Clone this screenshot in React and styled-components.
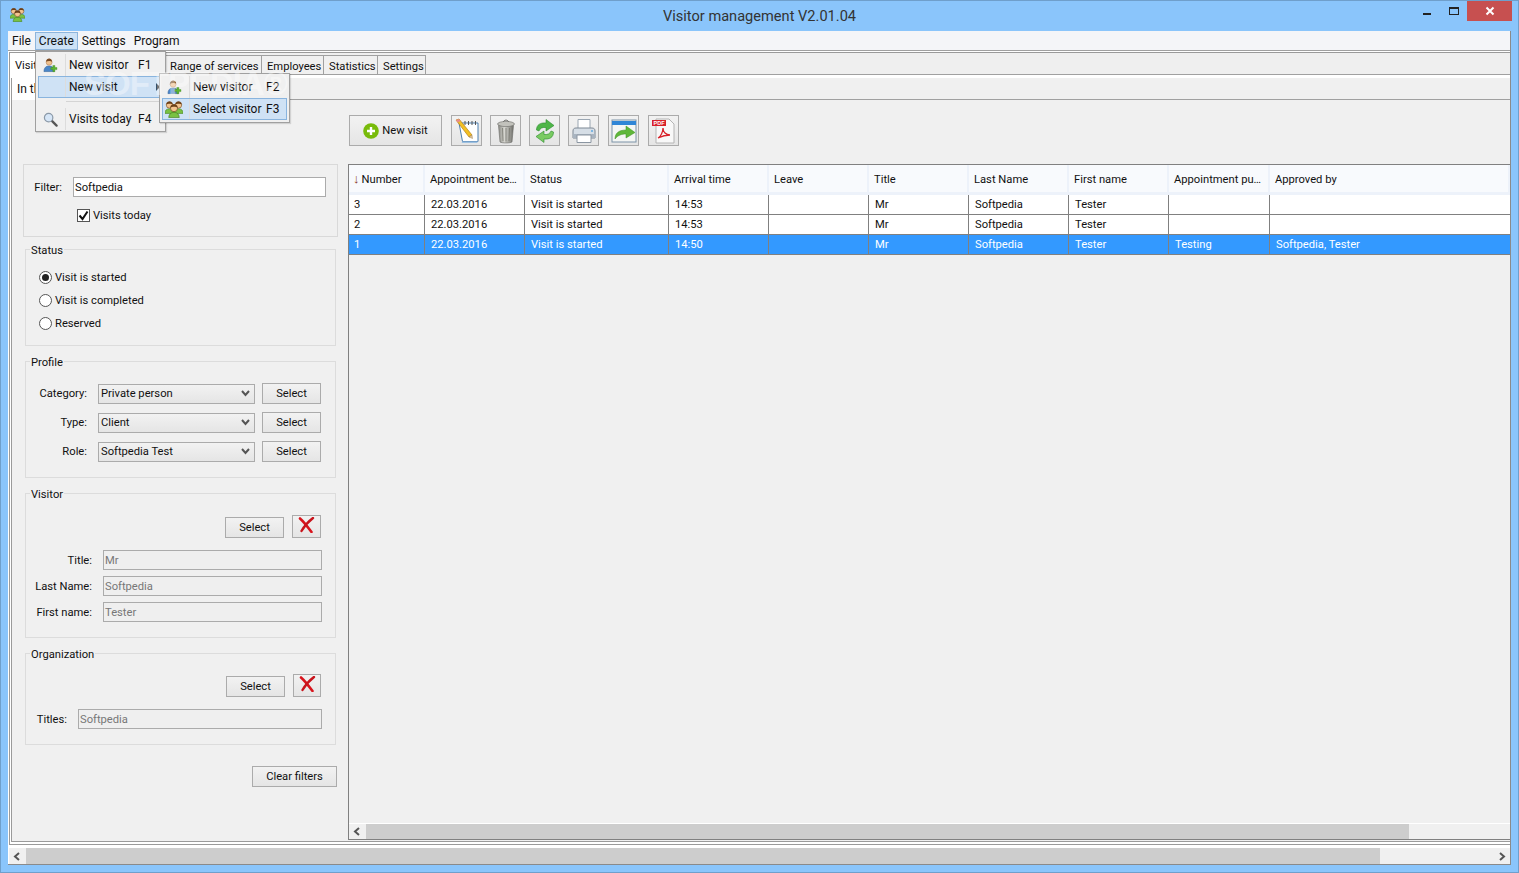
import React from "react"
import styled, { createGlobalStyle } from "styled-components"

const GlobalStyle = createGlobalStyle`
  html, body { margin: 0; padding: 0; overflow: hidden; }
  body { font-family: Roboto, "Noto Sans", "Liberation Sans", sans-serif; font-size: 11.2px; color: #111; }
  * { box-sizing: border-box; }
`

const Window = styled.div`
  position: relative;
  width: 1519px;
  height: 873px;
  display: flex;
  flex-direction: column;
  background: #8ac5fb;
  border: 1px solid #6f9fcb;
`
const TitleBar = styled.div`
  height: 30px;
  flex: none;
  display: grid;
  grid-template-columns: 1fr auto 1fr;
  align-items: center;
`
const TitleIcon = styled.div`
  display: flex;
  margin: -3px 0 0 9px;
`
const TitleText = styled.div`
  font-size: 14.6px;
  color: #333;
`
const WinControls = styled.div`
  display: flex;
  justify-content: flex-end;
  align-self: start;
  padding-right: 6px;
`
const WinBtn = styled.div`
  width: ${p => p.$w}px;
  height: 20px;
  display: flex;
  align-items: center;
  justify-content: center;
  background: ${p => p.$close ? "#c75050" : "transparent"};
`
const MinGlyph = styled.div`
  width: 8px;
  height: 2px;
  background: #222;
  margin-top: 6px;
`
const MaxGlyph = styled.div`
  width: 10px;
  height: 8px;
  border: 1px solid #222;
  border-top-width: 2px;
`
const Client = styled.div`
  flex: none;
  height: 834px;
  margin: 0 7px;
  background: #fff;
  display: flex;
  flex-direction: column;
  border-bottom: 1px solid #8a8a8a;
  border-right: 1px solid #8a8a8a;
`
const MenuBar = styled.div`
  height: 20px;
  flex: none;
  display: flex;
  align-items: stretch;
  background: #f4f5f8;
  border-bottom: 1px solid #a0a0a0;
`
const MenuTitle = styled.div`
  display: flex;
  align-items: center;
  padding: 0 4px;
  font-size: 12px;
  height: 18px;
  margin-top: 1px;
  background: ${p => p.$open ? "#cde2f6" : "transparent"};
  outline: ${p => p.$open ? "1px solid #8db5dc" : "none"};
  outline-offset: -1px;
`
const OuterTabs = styled.div`
  flex: none;
  height: 793px;
  margin: 1px 0 0 1px;
  border: 1px solid #9a9a9a;
  border-right: none;
  display: flex;
  flex-direction: column;
`
const TabRow = styled.div`
  height: 22px;
  flex: none;
  display: flex;
  align-items: flex-end;
  background: #efefef;
  border-bottom: 1px solid #a0a0a0;
`
const Tab = styled.div`
  height: ${p => p.$active ? 22 : 20}px;
  width: ${p => p.$w}px;
  display: flex;
  align-items: center;
  padding: 2px 0 0 5px;
  margin-bottom: -1px;
  background: ${p => p.$active ? "#fff" : "#f0f0f0"};
  border-right: 1px solid #a0a0a0;
  border-top: ${p => p.$active ? "none" : "1px solid #a0a0a0"};
  border-bottom: ${p => p.$active ? "none" : "1px solid #a0a0a0"};
  overflow: hidden;
  white-space: nowrap;
`
const InnerTabs = styled.div`
  flex: 1;
  min-height: 0;
  margin: 3px 0 2px 1px;
  display: flex;
  flex-direction: column;
  border: 1px solid #9a9a9a;
  border-top: none;
  border-right: none;
`
const InnerTabRow = styled.div`
  height: 22px;
  flex: none;
  display: flex;
  background: #f0f0f0;
  border-bottom: 1px solid #a0a0a0;
`
const InnerTab = styled.div`
  width: 110px;
  height: 22px;
  display: flex;
  align-items: center;
  padding-left: 5px;
  background: #fff;
  font-size: 12px;
`
const Body = styled.div`
  flex: 1;
  min-height: 0;
  display: flex;
  background: #f0f0f0;
`
const Sidebar = styled.div`
  width: 336px;
  flex: none;
  display: flex;
  flex-direction: column;
  padding-top: 64px;
`
const FilterBox = styled.div`
  margin-left: 11px;
  width: 315px;
  height: 73px;
  padding: 12px 11px 0 0;
  border: 1px solid #d9d9d9;
  display: flex;
  flex-direction: column;
`
const Row = styled.div`
  display: flex;
  align-items: ${p => p.$end ? "flex-end" : "center"};
  justify-content: ${p => p.$end ? "flex-end" : "flex-start"};
  height: ${p => p.$h || 20}px;
  gap: ${p => p.$gap || 0}px;
  margin-top: ${p => p.$mt || 0}px;
  padding-right: ${p => p.$pr || 0}px;
`
const Label = styled.div`
  width: ${p => p.$w}px;
  flex: none;
  text-align: right;
  padding-right: ${p => p.$pr || 11}px;
`
const TextInput = styled.div`
  flex: 1;
  height: 20px;
  display: flex;
  align-items: center;
  padding-left: 1px;
  border: 1px solid #ababab;
  background: ${p => p.$disabled ? "#efefef" : "#fff"};
  color: ${p => p.$disabled ? "#777" : "#111"};
`
const CheckRow = styled.div`
  display: flex;
  align-items: center;
  gap: 3px;
  margin: 12px 0 0 53px;
`
const CheckBox = styled.div`
  width: 13px;
  height: 13px;
  background: #fff;
  border: 1px solid #555;
  display: flex;
  align-items: center;
  justify-content: center;
`
const Group = styled.fieldset`
  margin: ${p => p.$mt}px 0 0 13px;
  padding: ${p => p.$pt}px 0 0 0;
  width: 311px;
  height: ${p => p.$h}px;
  border: 1px solid #dcdcdc;
  min-width: 0;
`
const Legend = styled.legend`
  margin-left: 4px;
  padding: 0 1px;
  height: 14px;
  line-height: 18px;
`
const RadioRow = styled.div`
  display: flex;
  align-items: center;
  gap: 3px;
  height: 23px;
  margin-left: 13px;
`
const Radio = styled.div`
  width: 13px;
  height: 13px;
  border-radius: 50%;
  border: 1px solid #555;
  background: #fff;
  display: flex;
  align-items: center;
  justify-content: center;
  &::after {
    content: "";
    display: ${p => p.$on ? "block" : "none"};
    width: 7px;
    height: 7px;
    border-radius: 50%;
    background: #222;
  }
`
const Combo = styled.div`
  width: 157px;
  height: 20px;
  flex: none;
  display: flex;
  align-items: center;
  justify-content: space-between;
  padding: 0 4px 0 2px;
  border: 1px solid #ababab;
  background: linear-gradient(#f2f2f2, #e5e5e5);
`
const Button = styled.div`
  width: ${p => p.$w || 59}px;
  height: 21px;
  flex: none;
  display: flex;
  align-items: center;
  justify-content: center;
  border: 1px solid #ababab;
  background: linear-gradient(#f2f2f2, #e5e5e5);
`
const ProfileButton = styled(Button)`
  margin-left: 7px;
`
const IconBtn = styled.div`
  width: ${p => p.$w || 29}px;
  height: 23px;
  flex: none;
  display: flex;
  align-items: center;
  justify-content: center;
  padding-bottom: 3px;
  border: 1px solid #ababab;
  background: linear-gradient(#f2f2f2, #e5e5e5);
`
const ClearRow = styled.div`
  display: flex;
  justify-content: flex-end;
  margin-top: 21px;
  width: 325px;
`
const Main = styled.div`
  flex: 1;
  min-width: 0;
  display: flex;
  flex-direction: column;
`
const Toolbar = styled.div`
  height: 64px;
  flex: none;
  display: flex;
  align-items: flex-start;
  padding: 15px 0 0 1px;
`
const ToolText = styled.div`
  width: 93px;
  height: 31px;
  flex: none;
  display: flex;
  align-items: center;
  justify-content: center;
  gap: 3px;
  border: 1px solid #ababab;
  background: linear-gradient(#f2f2f2, #e5e5e5);
`
const ToolIcon = styled.div`
  width: 31px;
  height: 31px;
  flex: none;
  margin-left: ${p => p.$ml}px;
  display: flex;
  align-items: center;
  justify-content: center;
  border: 1px solid #ababab;
  background: linear-gradient(#f2f2f2, #e5e5e5);
`
const TablePanel = styled.div`
  flex: 1;
  min-height: 0;
  display: flex;
  flex-direction: column;
  border: 1px solid #808080;
  border-right: none;
  margin-bottom: 1px;
`
const TableArea = styled.div`
  flex: 1;
  min-height: 0;
`
const Grid = styled.table`
  width: 100%;
  table-layout: fixed;
  border-collapse: separate;
  border-spacing: 0;
`
const Th = styled.th`
  height: 30px;
  padding: 3px 0 0 ${p => p.$first ? 4 : 5}px;
  font-weight: 400;
  font-size: 11.2px;
  line-height: 14px;
  text-align: left;
  white-space: nowrap;
  overflow: hidden;
  background: #f8fafd;
  border-right: 2px solid #edf2fa;
  border-bottom: 3px solid #edf2fa;
`
const Td = styled.td`
  height: 20px;
  padding: 0 0 0 ${p => p.$first ? 5 : 6}px;
  white-space: nowrap;
  overflow: hidden;
  background: ${p => p.$sel ? "#3399ff" : "#fff"};
  color: ${p => p.$sel ? "#fff" : "#111"};
  border-right: 1px solid #808080;
  border-bottom: 1px solid #808080;
  &:last-child { border-right: none; }
`
const SortArrow = styled.span`
  color: #8c3b2e;
  margin-right: 2px;
  font-size: 13px;
  line-height: 12px;
`
const ScrollBar = styled.div`
  height: 16px;
  flex: none;
  display: flex;
  align-items: stretch;
  background: #f0f0f0;
  border-top: ${p => p.$line ? "1px solid #fff" : "none"};
`
const ScrollArrow = styled.div`
  width: 17px;
  flex: none;
  display: flex;
  align-items: center;
  justify-content: center;
`
const ScrollThumb = styled.div`
  width: ${p => p.$w}px;
  flex: none;
  background: #cdcdcd;
`
const ScrollTrack = styled.div`
  flex: 1;
`
const BottomScroll = styled(ScrollBar)`
  margin-top: 3px;
  margin-left: 1px;
`
const Popup = styled.div`
  position: absolute;
  left: ${p => p.$x}px;
  top: ${p => p.$y}px;
  width: ${p => p.$w}px;
  height: ${p => p.$h}px;
  padding: 2px;
  background: #f0f0f0;
  border: 1px solid #a0a0a0;
  box-shadow: 1px 1px 1px rgba(0, 0, 0, 0.12);
  display: flex;
  flex-direction: column;
  z-index: ${p => p.$z};
`
const PopItem = styled.div`
  height: 22px;
  flex: none;
  display: flex;
  align-items: center;
  font-size: 12px;
  background: ${p => p.$hot ? "#cfe2f5" : "transparent"};
  outline: ${p => p.$hot ? "1px solid #89b4de" : "none"};
  outline-offset: -1px;
`
const PopIcon = styled.div`
  width: 28px;
  height: 100%;
  flex: none;
  display: flex;
  align-items: center;
  justify-content: center;
  padding-right: 3px;
  border-right: 1px solid #dcdcdc;
`
const PopLabel = styled.div`
  margin-left: 3px;
  width: ${p => p.$w}px;
`
const PopArrow = styled.div`
  margin-left: auto;
  margin-right: 3px;
  width: 0;
  height: 0;
  border-left: 4px solid #222;
  border-top: 4px solid transparent;
  border-bottom: 4px solid transparent;
`
const PopSep = styled.div`
  height: 1px;
  margin: 3px 0 6px 28px;
  background: #d4d4d4;
  flex: none;
`
const Watermark = styled.div`
  position: absolute;
  left: 83px;
  top: 64px;
  z-index: 5;
  font-family: "Liberation Sans", sans-serif;
  font-weight: 700;
  font-size: 33px;
  letter-spacing: -1px;
  white-space: nowrap;
  color: rgba(255, 255, 255, 0.38);
  pointer-events: none;
`

const UserAdd = () => (
  <svg width="15" height="16" viewBox="0 0 16 16">
    <path d="M1 15c0-4 2-6 5.500-6S12 11 12 15z" fill="#4a86c8" stroke="#2d5f99" strokeWidth=".6" />
    <circle cx="6.500" cy="5" r="3.200" fill="#f0c08c" stroke="#a5744a" strokeWidth=".5" />
    <path d="M3.300 4.500C3.500 1.800 5 1 6.500 1s3 .8 3.200 3.500C8.500 3.500 5 3.200 3.300 4.500z" fill="#7a4a22" />
    <path d="M10.500 8.500h2.200v2.200h2.200v2.200h-2.200v2.200h-2.200v-2.200H8.300v-2.200h2.200z" fill="#5cb531" stroke="#3d8a1c" strokeWidth=".4" />
  </svg>
)
const Person = ({ x, y, s = 1 }) => (
  <g transform={`translate(${x} ${y}) scale(${s})`}>
    <path d="M-5 11c0-3 2-5 5-5s5 2 5 5z" fill="#79c143" stroke="#3f7d1c" strokeWidth=".6" />
    <circle cx="0" cy="2" r="3.400" fill="#f4c48f" stroke="#6b3f18" strokeWidth=".6" />
    <path d="M-3.400 1.800C-3.200-1-1.500-1.700 0-1.700S3.200-1 3.400 1.800C2 .4-2 .4-3.400 1.800z" fill="#6b3f18" />
  </g>
)
const Group3 = ({ size = 18 }) => (
  <svg width={size} height={size} viewBox="0 0 18 18">
    <Person x={4.500} y={3} s={0.95} />
    <Person x={13.500} y={3} s={0.95} />
    <Person x={9} y={6} s={1.05} />
  </svg>
)
const Magnifier = () => (
  <svg width="15" height="15" viewBox="0 0 16 16">
    <path d="M9.500 9.500L14.500 14.500" stroke="#555" strokeWidth="2.400" strokeLinecap="round" />
    <circle cx="6" cy="6" r="4.500" fill="#d6e6f7" stroke="#8b99a8" strokeWidth="1.300" />
  </svg>
)
const PlusCircle = () => (
  <svg width="16" height="16" viewBox="0 0 16 16">
    <circle cx="8" cy="8" r="7.800" fill="#78bb0a" />
    <path d="M8 4v8M4 8h8" stroke="#fff" strokeWidth="2.400" />
  </svg>
)
const Notepad = () => (
  <svg width="26" height="26" viewBox="0 0 26 26">
    <path d="M5 5h19v18.500H8.500z" fill="#fff" stroke="#4b7fb0" strokeWidth="1" />
    <path d="M8.500 23.500L7.500 25H23l1-1.500z" fill="#9dc0e0" />
    <path d="M11 3v4M14.500 3v4M18 3v4M21.500 3v4" stroke="#555" strokeWidth="1" />
    <path d="M2 2l3-1 13 16-3 2z" fill="#f2c024" stroke="#b5801a" strokeWidth=".7" />
    <path d="M2 2l3-1 1.500 2-3 1.500z" fill="#e88a8a" />
    <path d="M15 19l3-2 .5 3.500z" fill="#e5c9a0" stroke="#8a6a3a" strokeWidth=".4" />
  </svg>
)
const Trash = () => (
  <svg width="22" height="26" viewBox="0 0 22 26">
    <defs>
      <linearGradient id="tr" x1="0" x2="1" y1="0" y2="0">
        <stop offset="0" stopColor="#8c8c86" />
        <stop offset=".4" stopColor="#d6d6d0" />
        <stop offset="1" stopColor="#6f6f6a" />
      </linearGradient>
    </defs>
    <path d="M3.500 7.500h15l-1.500 16.500c-2 1.200-10 1.200-12 0z" fill="url(#tr)" stroke="#6a6a66" strokeWidth=".6" />
    <path d="M7.500 10l.5 13M11 10v13.500M14.500 10l-.5 13" stroke="#77776f" strokeWidth=".8" />
    <ellipse cx="11" cy="6" rx="8.500" ry="2.600" fill="#c2c2bc" stroke="#6a6a66" strokeWidth=".6" />
    <path d="M8.500 4c0-2.500 5-2.500 5 0" fill="none" stroke="#6a6a66" strokeWidth="1" />
  </svg>
)
const Refresh = () => (
  <svg width="22" height="26" viewBox="0 0 22 26">
    <path d="M2.500 12C2.500 6.500 6.500 4.500 12 5V1.500L20 7.500l-8 5.500V9.500C8.500 9.200 6 10 5 13z" fill="#4eb648" stroke="#2a8a2e" strokeWidth=".6" />
    <path d="M19.500 14c0 5.500-4 7.500-9.500 7v3.500L2 18.500l8-5.500v3.500c3.500.3 6-.5 7-3.500z" fill="#7acb62" stroke="#2a8a2e" strokeWidth=".6" />
  </svg>
)
const Printer = () => (
  <svg width="26" height="26" viewBox="0 0 26 26">
    <path d="M7 1.500h12v10H7z" fill="#fff" stroke="#9aa6b2" />
    <path d="M2 13c0-2 1-3 3-3h16c2 0 3 1 3 3v7H2z" fill="#d6dee6" stroke="#7d8894" />
    <path d="M2 16h22v4H2z" fill="#a9b4c0" />
    <path d="M6 17h14v7.500H6z" fill="#fff" stroke="#8b96a2" />
    <circle cx="21" cy="13" r="1" fill="#5fa8e0" />
  </svg>
)
const WindowArrow = () => (
  <svg width="26" height="24" viewBox="0 0 26 24">
    <rect x="1" y="1" width="24" height="22" fill="#f4f6f4" stroke="#7d93a8" />
    <rect x="1" y="2" width="24" height="4" fill="#2f86d6" />
    <path d="M4 20c0-6 4-9 11-9V7l9 6.500L15 19v-4c-4 0-8 1-11 5z" fill="#5fb83a" stroke="#3d8f22" strokeWidth=".5" />
  </svg>
)
const PdfFile = () => (
  <svg width="26" height="26" viewBox="0 0 26 26">
    <path d="M5 1h13l5 5v19H5z" fill="#f8f8f8" stroke="#b4b4b4" />
    <rect x="1" y="2" width="14" height="6" fill="#d8222a" />
    <text x="8" y="7" fontSize="5.500" fontWeight="700" fill="#fff" textAnchor="middle" fontFamily="Liberation Sans, sans-serif">PDF</text>
    <path d="M7 20c3-1 5-7 5-10 0 4 3 7 7 7-4 0-8 1-12 3z" fill="none" stroke="#d8222a" strokeWidth="1.300" />
  </svg>
)
const RedX = () => (
  <svg width="17" height="16" viewBox="0 0 17 16">
    <path d="M2 1.500C5 4 9 9 13.500 15" fill="none" stroke="#d8141c" strokeWidth="2.600" strokeLinecap="round" />
    <path d="M15 1C11 4 7 8 3.500 14" fill="none" stroke="#c8141c" strokeWidth="2.400" strokeLinecap="round" />
  </svg>
)
const Chevron = ({ dir = "down", color = "#555" }) => {
  const pts = { down: "1,2 4.500,6 8,2", left: "6,1 2,4.500 6,8", right: "3,1 7,4.500 3,8" }
  return (
    <svg width="9" height="9" viewBox="0 0 9 9">
      <polyline points={pts[dir]} fill="none" stroke={color} strokeWidth="2" />
    </svg>
  )
}
const CheckMark = () => (
  <svg width="11" height="11" viewBox="0 0 11 11">
    <path d="M1.500 5.500l3 3.500 5-7.500" fill="none" stroke="#111" strokeWidth="2" />
  </svg>
)

const columns = [
  { key: "number", title: "Number", width: 76 },
  { key: "begin", title: "Appointment be…", width: 100 },
  { key: "status", title: "Status", width: 144 },
  { key: "arrival", title: "Arrival time", width: 100 },
  { key: "leave", title: "Leave", width: 100 },
  { key: "title", title: "Title", width: 100 },
  { key: "last", title: "Last Name", width: 100 },
  { key: "first", title: "First name", width: 100 },
  { key: "purpose", title: "Appointment pu…", width: 101 },
  { key: "approved", title: "Approved by" },
]

const rows = [
  { number: "3", begin: "22.03.2016", status: "Visit is started", arrival: "14:53", leave: "", title: "Mr", last: "Softpedia", first: "Tester", purpose: "", approved: "" },
  { number: "2", begin: "22.03.2016", status: "Visit is started", arrival: "14:53", leave: "", title: "Mr", last: "Softpedia", first: "Tester", purpose: "", approved: "" },
  { number: "1", begin: "22.03.2016", status: "Visit is started", arrival: "14:50", leave: "", title: "Mr", last: "Softpedia", first: "Tester", purpose: "Testing", approved: "Softpedia, Tester", selected: true },
]

const ProfileRow = ({ label, value, mt }) => (
  <Row $mt={mt} $h={21}>
    <Label $w={72}>{label}</Label>
    <Combo>{value}<Chevron /></Combo>
    <ProfileButton>Select</ProfileButton>
  </Row>
)

const ReadOnlyRow = ({ label, value, mt, w }) => (
  <Row $mt={mt} $pr={13}>
    <Label $w={w}>{label}</Label>
    <TextInput $disabled>{value}</TextInput>
  </Row>
)

export default function App() {
  return (
    <>
      <GlobalStyle />
      <Window>
        <TitleBar>
          <TitleIcon><Group3 size={15} /></TitleIcon>
          <TitleText>Visitor management V2.01.04</TitleText>
          <WinControls>
            <WinBtn $w={28}><MinGlyph /></WinBtn>
            <WinBtn $w={26}><MaxGlyph /></WinBtn>
            <WinBtn $w={45} $close>
              <svg width="10" height="10" viewBox="0 0 10 10">
                <path d="M1.500 1.500l7 7M8.500 1.500l-7 7" stroke="#fff" strokeWidth="2" />
              </svg>
            </WinBtn>
          </WinControls>
        </TitleBar>
        <Client>
          <MenuBar>
            <MenuTitle>File</MenuTitle>
            <MenuTitle $open>Create</MenuTitle>
            <MenuTitle>Settings</MenuTitle>
            <MenuTitle>Program</MenuTitle>
          </MenuBar>
          <OuterTabs>
            <TabRow>
              <Tab $active $w={155}>Visits</Tab>
              <Tab $w={97}>Range of services</Tab>
              <Tab $w={62}>Employees</Tab>
              <Tab $w={54}>Statistics</Tab>
              <Tab $w={48}>Settings</Tab>
            </TabRow>
            <InnerTabs>
              <InnerTabRow><InnerTab>In the office</InnerTab></InnerTabRow>
              <Body>
                <Sidebar>
                  <FilterBox>
                    <Row>
                      <Label $w={49}>Filter:</Label>
                      <TextInput>Softpedia</TextInput>
                    </Row>
                    <CheckRow>
                      <CheckBox><CheckMark /></CheckBox>
                      Visits today
                    </CheckRow>
                  </FilterBox>
                  <Group $mt={5} $h={104} $pt={10}>
                    <Legend>Status</Legend>
                    <RadioRow><Radio $on />Visit is started</RadioRow>
                    <RadioRow><Radio />Visit is completed</RadioRow>
                    <RadioRow><Radio />Reserved</RadioRow>
                  </Group>
                  <Group $mt={8} $h={124} $pt={15}>
                    <Legend>Profile</Legend>
                    <ProfileRow label="Category:" value="Private person" />
                    <ProfileRow label="Type:" value="Client" mt={8} />
                    <ProfileRow label="Role:" value="Softpedia Test" mt={8} />
                  </Group>
                  <Group $mt={8} $h={152} $pt={15}>
                    <Legend>Visitor</Legend>
                    <Row $end $h={23} $gap={8} $pr={14}>
                      <Button>Select</Button>
                      <IconBtn><RedX /></IconBtn>
                    </Row>
                    <ReadOnlyRow label="Title:" value="Mr" mt={12} w={77} />
                    <ReadOnlyRow label="Last Name:" value="Softpedia" mt={6} w={77} />
                    <ReadOnlyRow label="First name:" value="Tester" mt={6} w={77} />
                  </Group>
                  <Group $mt={8} $h={99} $pt={14}>
                    <Legend>Organization</Legend>
                    <Row $end $h={23} $gap={8} $pr={14}>
                      <Button>Select</Button>
                      <IconBtn $w={28}><RedX /></IconBtn>
                    </Row>
                    <ReadOnlyRow label="Titles:" value="Softpedia" mt={12} w={52} />
                  </Group>
                  <ClearRow><Button $w={85}>Clear filters</Button></ClearRow>
                </Sidebar>
                <Main>
                  <Toolbar>
                    <ToolText><PlusCircle />New visit</ToolText>
                    <ToolIcon $ml={9}><Notepad /></ToolIcon>
                    <ToolIcon $ml={8}><Trash /></ToolIcon>
                    <ToolIcon $ml={8}><Refresh /></ToolIcon>
                    <ToolIcon $ml={8}><Printer /></ToolIcon>
                    <ToolIcon $ml={9}><WindowArrow /></ToolIcon>
                    <ToolIcon $ml={9}><PdfFile /></ToolIcon>
                  </Toolbar>
                  <TablePanel>
                    <TableArea>
                      <Grid>
                        <colgroup>
                          {columns.map(c => <col key={c.key} style={c.width ? { width: c.width } : undefined} />)}
                        </colgroup>
                        <thead>
                          <tr>
                            {columns.map((c, i) => (
                              <Th key={c.key} $first={i === 0}>
                                {i === 0 && <SortArrow>↓</SortArrow>}
                                {c.title}
                              </Th>
                            ))}
                          </tr>
                        </thead>
                        <tbody>
                          {rows.map(r => (
                            <tr key={r.number}>
                              {columns.map((c, i) => (
                                <Td key={c.key} $sel={r.selected} $first={i === 0}>{r[c.key]}</Td>
                              ))}
                            </tr>
                          ))}
                        </tbody>
                      </Grid>
                    </TableArea>
                    <ScrollBar $line>
                      <ScrollArrow><Chevron dir="left" /></ScrollArrow>
                      <ScrollThumb $w={1043} />
                      <ScrollTrack />
                    </ScrollBar>
                  </TablePanel>
                </Main>
              </Body>
            </InnerTabs>
          </OuterTabs>
          <BottomScroll>
            <ScrollArrow><Chevron dir="left" /></ScrollArrow>
            <ScrollThumb $w={1354} />
            <ScrollTrack />
            <ScrollArrow><Chevron dir="right" /></ScrollArrow>
          </BottomScroll>
        </Client>

        <Popup $x={34} $y={50} $w={131} $h={81} $z={3}>
          <PopItem>
            <PopIcon><UserAdd /></PopIcon>
            <PopLabel $w={69}>New visitor</PopLabel>
            F1
          </PopItem>
          <PopItem $hot>
            <PopIcon />
            <PopLabel $w={69}>New visit</PopLabel>
            <PopArrow />
          </PopItem>
          <PopSep />
          <PopItem>
            <PopIcon><Magnifier /></PopIcon>
            <PopLabel $w={69}>Visits today</PopLabel>
            F4
          </PopItem>
        </Popup>
        <Popup $x={158} $y={72} $w={131} $h={50} $z={4}>
          <PopItem>
            <PopIcon><UserAdd /></PopIcon>
            <PopLabel $w={73}>New visitor</PopLabel>
            F2
          </PopItem>
          <PopItem $hot>
            <PopIcon><Group3 /></PopIcon>
            <PopLabel $w={73}>Select visitor</PopLabel>
            F3
          </PopItem>
        </Popup>
        <Watermark>SOFTPEDIA®</Watermark>
      </Window>
    </>
  )
}
